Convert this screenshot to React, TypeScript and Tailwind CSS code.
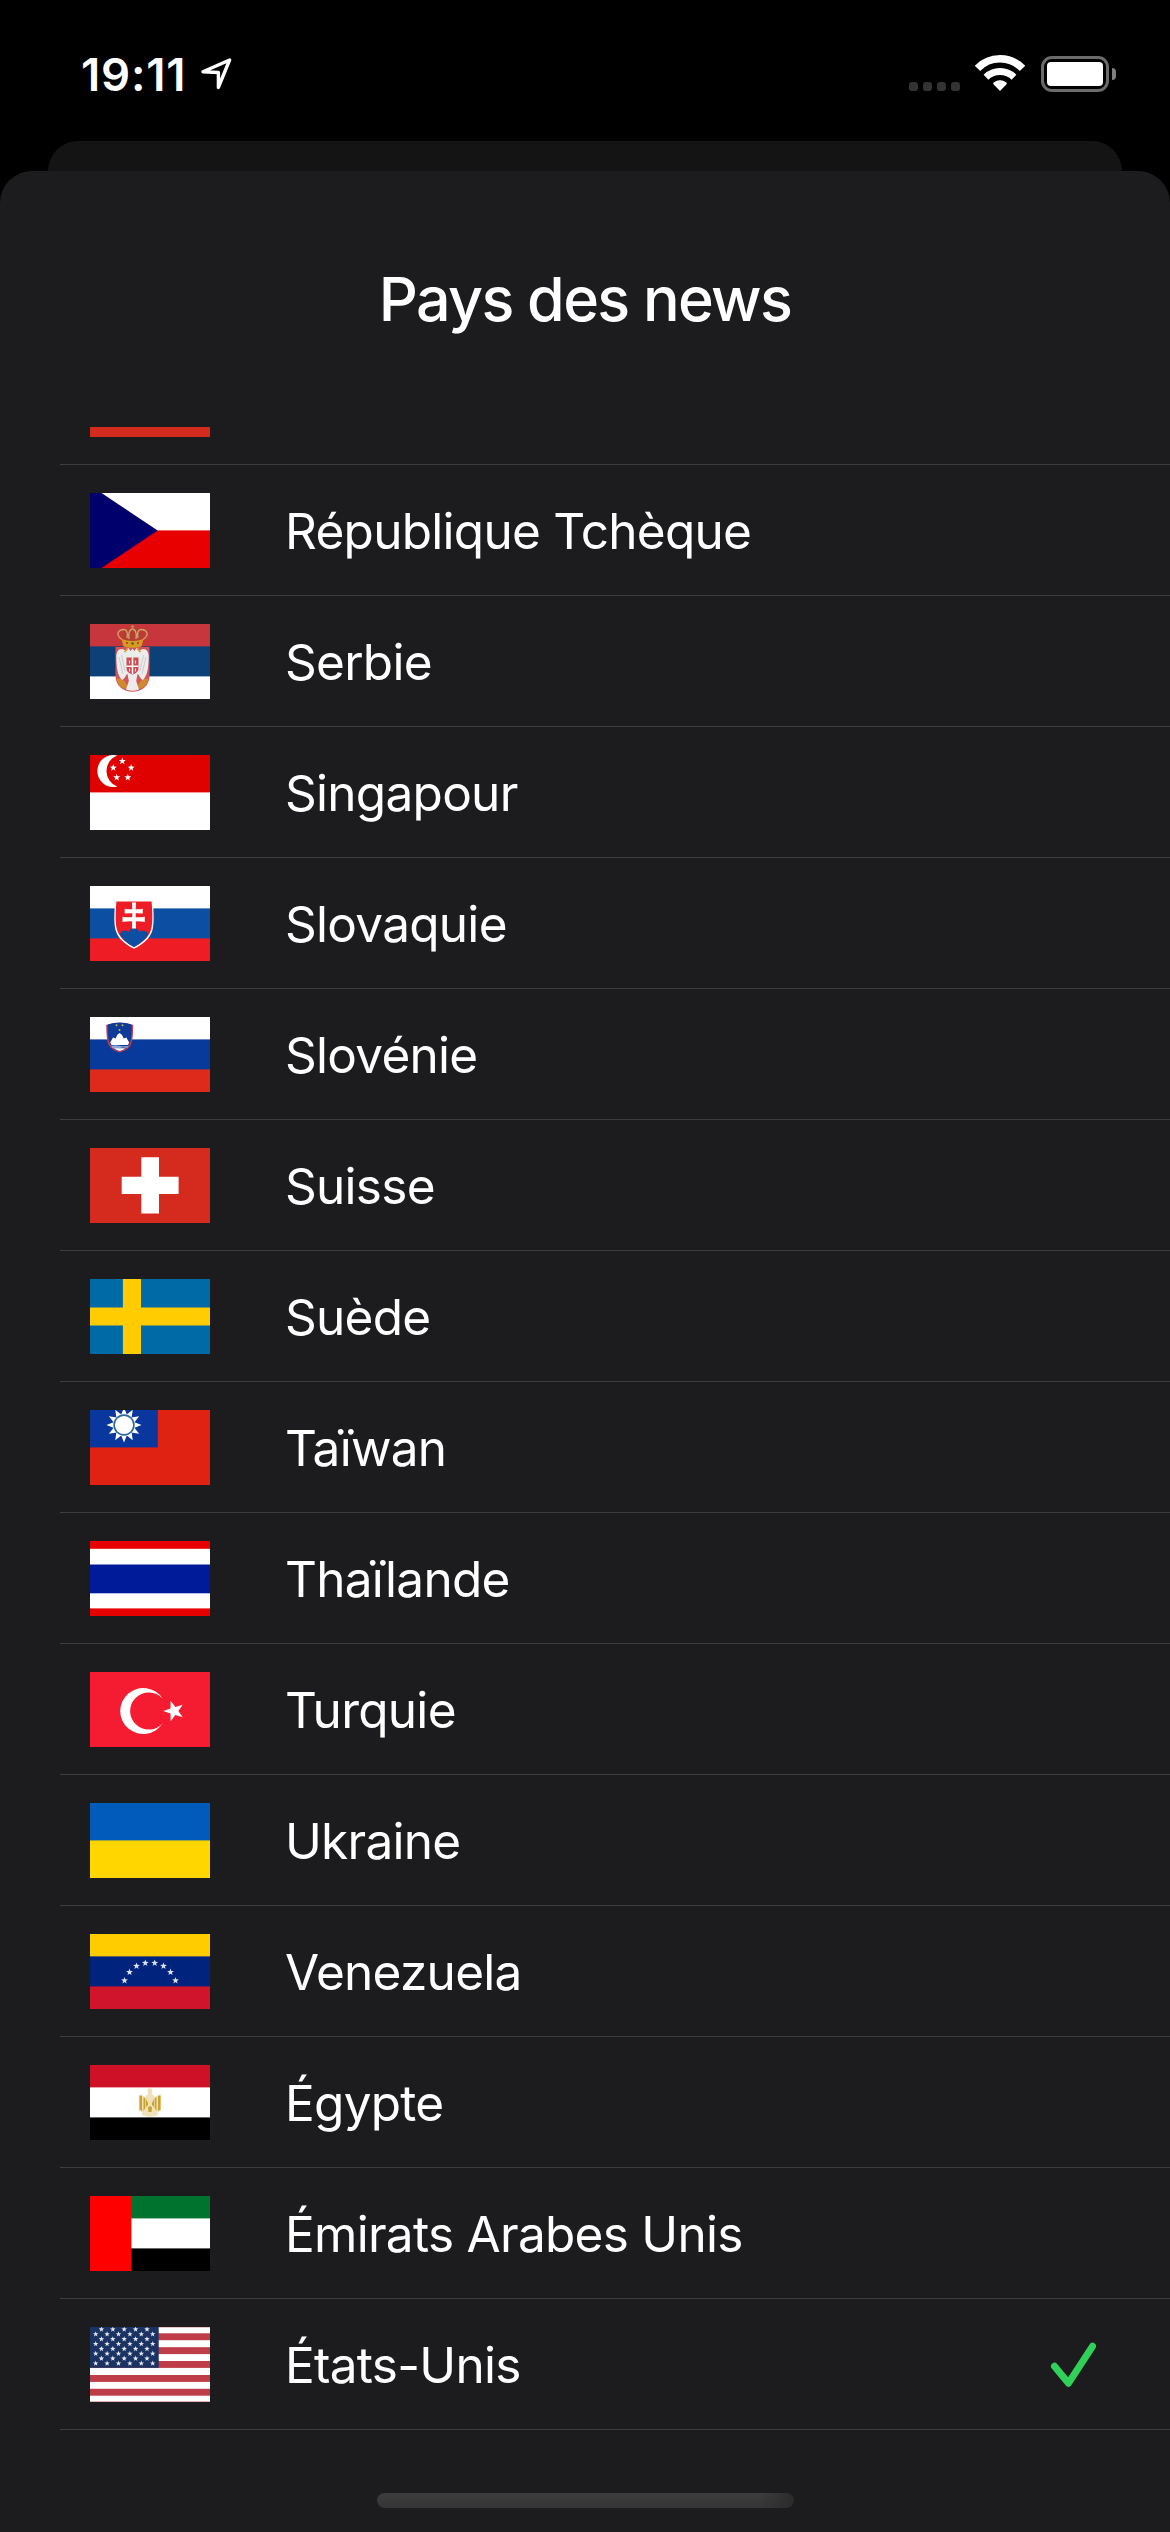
import React from "react";

function starPoints(cx: number, cy: number, r: number, tilt = -90) {
  const pts: string[] = [];
  for (let i = 0; i < 10; i++) {
    const rad = i % 2 === 0 ? r : r * 0.4;
    const a = ((tilt + i * 36) * Math.PI) / 180;
    pts.push(`${(cx + rad * Math.cos(a)).toFixed(2)},${(cy + rad * Math.sin(a)).toFixed(2)}`);
  }
  return pts.join(" ");
}

function Star({ x, y, r, tilt, fill = "#fff" }: { x: number; y: number; r: number; tilt?: number; fill?: string }) {
  return <polygon points={starPoints(x, y, r, tilt)} fill={fill} />;
}

function Bands({ colors, at }: { colors: string[]; at: number[] }) {
  return (
    <>
      {colors.map((c, i) => (
        <rect key={i} x="0" y={at[i]} width="120" height={75 - at[i]} fill={c} />
      ))}
    </>
  );
}

const THIRDS = [0, 22.4, 52.4];

const Czech = () => (
  <>
    <Bands colors={["#fff", "#e80000"]} at={[0, 37.4]} />
    <path d="M0 0H11.5L67.6 37.5 11.5 75H0Z" fill="#00006d" />
  </>
);

const Serbia = () => (
  <>
    <Bands colors={["#c6363c", "#0c4076", "#fff"]} at={THIRDS} />
    <path d="M25.5 23H59.5V52C59.5 62 51 67.8 42.5 67.8S25.5 62 25.5 52Z" fill="#d3545a" />
    <path d="M26.6 55C30 54 36 55 38 65 31 65 27.500 60 26.600 55ZM58.400 55C55 54 49 55 47 65 54 65 57.500 60 58.400 55Z" fill="#cf8a2e" />
    <path d="M38.500 24C35 24 37 28 34.500 26 30 23 26 27 26.300 33 26.500 42 27 51 32 56 35 55 36 50 37.500 50L38.800 57 36 65.500Q42.500 68 49 65.500L46.200 57 47.500 50C49 50 50 55 53 56 58 51 58.500 42 58.700 33 59 27 55 23 50.500 26 48 28 50 24 46.500 24L44.500 27 42.500 24.500 40.500 27Z" fill="#ececec" />
    <path d="M29 33L33 50M31.500 31L35 47M56 33L52 50M53.500 31L50 47" stroke="#b9bcc2" strokeWidth="0.7" />
    <path d="M36.500 33.500H48.500V44C48.500 48 45 50 42.500 50.500 40 50 36.500 48 36.500 44Z" fill="#cf4a51" />
    <path d="M42.500 33.500V50M36.500 42.300H48.500" stroke="#fff" strokeWidth="1.600" />
    <path d="M39.500 36.500V39.500M45.500 36.500V39.500M39.500 44.500V47.500M45.500 44.500V47.500" stroke="#eee" strokeWidth="1.100" />
    <path d="M32.500 14Q31 5.500 42.500 5.500T52.500 14L51.500 20H33.500Z" fill="#a8442f" opacity="0.600" />
    <path d="M33.500 22.500L31.500 15Q42.500 19 53.500 15L51.500 22.500Q42.500 25 33.500 22.500Z" fill="#d99a22" />
    <path d="M32 15.500C25 11 28 5.500 34 5.500 37 5.500 38 9 37 14M53 15.500C60 11 57 5.500 51 5.500 48 5.500 47 9 48 14M39 15C38 9 39.500 5.500 42.500 5 45.500 5.500 47 9 46 15" fill="none" stroke="#cba566" strokeWidth="1.400" />
    <path d="M42.500 1V5.500M40.800 2.700H44.200" stroke="#b98f45" strokeWidth="1.300" />
    <circle cx="42.500" cy="19.500" r="1.300" fill="#40643c" />
    <circle cx="37" cy="19" r="1" fill="#a83324" />
    <circle cx="48" cy="19" r="1" fill="#a83324" />
    <path d="M38 24.500L34.500 28M47 24.500L50.500 28" stroke="#d99a22" strokeWidth="1.600" />
  </>
);

const Singapore = () => (
  <>
    <Bands colors={["#df0000", "#fff"]} at={[0, 37.4]} />
    <path d="M27.300 0.500A16 16 0 1 0 27.300 31.500A16.500 16.500 0 0 1 27.300 0.500Z" fill="#fff" />
    {[[32.3, 6.2], [23.3, 12.8], [41.2, 12.8], [26.7, 22.5], [37.8, 22.5]].map(([x, y]) => (
      <Star key={x} x={x} y={y} r={3.7} />
    ))}
  </>
);

const Slovakia = () => (
  <>
    <Bands colors={["#fff", "#0b4ea2", "#ee1c25"]} at={THIRDS} />
    <path d="M25.300 14.300H62.700C63.500 24 64.500 36 62.500 44 60 53 52 59 44 62.700 36 59 28 53 25.500 44 23.500 36 24.500 24 25.300 14.300Z" fill="#fff" />
    <path d="M26.400 15.500H61.600C62.300 25 63 36 61.200 43 59 52 51 57.500 44 60.900 37 57.500 29 52 26.800 43 25 36 25.700 25 26.400 15.500Z" fill="#ee1c25" />
    <path d="M30 48.500C30 45 36 43.500 38.800 46.300 39 41 49 41 49.200 46.300 52 43.500 58 45 58 48.500 54.500 54.500 49 58.500 44 60.900 39 58.500 33.500 54.500 30 48.500Z" fill="#0b4ea2" />
    <path d="M42 16.500H46L45.700 23.300Q49 23.500 52.800 22.800V27.600Q49 27 45.700 27.200L45.800 31.300Q50 31.500 54.800 30.700V36Q50 35.200 45.800 35.400L46 42.500H42L42.200 35.400Q38 35.200 32.500 36V30.700Q38 31.500 42.200 31.300L42.300 27.200Q39 27 34.700 27.600V22.800Q39 23.500 42.300 23.300Z" fill="#fff" />
  </>
);

const Slovenia = () => (
  <>
    <Bands colors={["#fff", "#073a9b", "#dd2a1b"]} at={THIRDS} />
    <path d="M16.200 8Q29.700 3.500 43.200 8C43 16 43 24 40.500 28.500 38 32.500 34 34 29.700 35.500 25.500 34 21.500 32.500 19 28.500 16.500 24 16.500 16 16.200 8Z" fill="#c63b4c" />
    <path d="M17.700 7.500Q29.700 3.500 41.700 7.500C41.700 16 41.500 23 39.500 27 37.500 31 34 33 29.700 34.300 25.500 33 22 31 20 27 18 23 17.700 16 17.700 7.500Z" fill="#0e3c98" />
    <path d="M20.200 25.500L23 20.500 25.500 21.500 27.500 17.500 29.700 16 32 18 33.800 21.500 36.300 20.500 39.200 25.500 38 28H21.500Z" fill="#fff" />
    <path d="M21 28.800Q25 27.800 29.700 28.800T38.500 28.800L37 31Q33 30 29.700 31T22.500 31Z" fill="#8fa6d6" />
    <path d="M24 31.300H35.500Q33 33.500 29.700 34 26.500 33.500 24 31.300Z" fill="#fff" />
    <circle cx="26.500" cy="8.300" r="1" fill="#c5b83c" />
    <circle cx="32.500" cy="8.300" r="1" fill="#c5b83c" />
    <circle cx="29.500" cy="13" r="1" fill="#c5b83c" />
  </>
);

const Switzerland = () => (
  <>
    <rect width="120" height="75" fill="#d52b1e" />
    <path d="M51.300 9.200H69V28.700H88.600V46.100H69V65.600H51.300V46.100H31.700V28.700H51.300Z" fill="#fff" />
  </>
);

const Sweden = () => (
  <>
    <rect width="120" height="75" fill="#006aa7" />
    <path d="M32.900 0H51V28.500H120V46.500H51V75H32.900V46.500H0V28.500H32.900Z" fill="#fecc00" />
  </>
);

const Taiwan = () => (
  <>
    <rect width="120" height="75" fill="#df2212" />
    <rect width="67.800" height="37.400" fill="#09379d" />
    {Array.from({ length: 12 }, (_, i) => (
      <polygon key={i} points="31,5 34,-2.500 37,5" fill="#fff" transform={`rotate(${i * 30} 34 15)`} />
    ))}
    <circle cx="34" cy="15" r="9.900" fill="#fff" stroke="#2a6a9c" strokeWidth="1.600" />
  </>
);

const Thailand = () => (
  <Bands colors={["#e80000", "#fff", "#001b9a", "#fff", "#e80000"]} at={[0, 7.8, 23.5, 52.3, 67.4]} />
);

const Turkey = () => (
  <>
    <rect width="120" height="75" fill="#f51b31" />
    <path d="M72.500 26.500A23 23 0 1 0 72.500 51.500A18.600 18.600 0 1 1 72.500 26.500Z" fill="#fff" />
    <Star x={84} y={39} r={10.8} tilt={180} />
  </>
);

const Ukraine = () => <Bands colors={["#005bbb", "#ffd600"]} at={[0, 37.4]} />;

const Venezuela = () => (
  <>
    <Bands colors={["#ffcc00", "#00247d", "#cf142b"]} at={THIRDS} />
    {[[34.5, 46.5], [39.5, 38.2], [46.5, 32], [55.3, 29], [64.7, 29], [73.5, 32], [80.5, 38.2], [85.5, 46.5]].map(([x, y]) => (
      <Star key={x} x={x} y={y} r={3.6} fill="#dfe3f0" />
    ))}
  </>
);

const Egypt = () => (
  <>
    <Bands colors={["#ce1126", "#fff", "#000"]} at={THIRDS} />
    <path d="M57.500 24.500Q60 22 62.500 24.500L62 29.500Q64.500 30 64.500 32L69.500 29.500H71.200V45.500L67.500 47.500 68 50Q60 53.500 52 50L52.500 47.500 48.800 45.500V29.500H50.500L55.500 32Q55.500 30 58 29.500Z" fill="#efe2b8" />
    <path d="M49.500 31L52 30.500V46L49.500 44.500ZM53.500 32.500L55.300 33V43L53.500 46ZM70.500 31L68 30.500V46L70.500 44.500ZM66.500 32.500L64.700 33V43L66.500 46ZM56 34L58 38V40L56 42ZM64 34L62 38V40L64 42ZM58 42.500Q60 40 62 42.500L61.500 47H58.500Z" fill="#c9a22f" />
  </>
);

const Emirates = () => (
  <>
    <Bands colors={["#00732f", "#fff", "#000"]} at={THIRDS} />
    <rect width="41.400" height="75" fill="#f00" />
  </>
);

const UnitedStates = () => (
  <>
    <rect width="120" height="75" fill="#fff" />
    {[-6.6, 6.3, 20.2, 34, 48, 61.8, 74.6].map((y) => (
      <rect key={y} y={y} width="120" height="6.900" fill="#bf3d48" />
    ))}
    <rect y="0" width="68.700" height="40.800" fill="#1b3363" />
    {Array.from({ length: 8 }, (_, row) =>
      Array.from({ length: row % 2 ? 6 : 5 }, (_, col) => (
        <Star key={`${row}-${col}`} x={(row % 2 ? 5.7 : 11.4) + col * 11.4} y={2.3 + row * 4.87} r={2.9} fill="#e6e9f0" />
      )),
    )}
  </>
);

const countries: { name: string; Flag: React.FC; selected?: boolean }[] = [
  { name: "République Tchèque", Flag: Czech },
  { name: "Serbie", Flag: Serbia },
  { name: "Singapour", Flag: Singapore },
  { name: "Slovaquie", Flag: Slovakia },
  { name: "Slovénie", Flag: Slovenia },
  { name: "Suisse", Flag: Switzerland },
  { name: "Suède", Flag: Sweden },
  { name: "Taïwan", Flag: Taiwan },
  { name: "Thaïlande", Flag: Thailand },
  { name: "Turquie", Flag: Turkey },
  { name: "Ukraine", Flag: Ukraine },
  { name: "Venezuela", Flag: Venezuela },
  { name: "Égypte", Flag: Egypt },
  { name: "Émirats Arabes Unis", Flag: Emirates },
  { name: "États-Unis", Flag: UnitedStates, selected: true },
];

function StatusBar() {
  return (
    <header className="flex h-[141px] items-start justify-between pl-[81px] pr-[54px] pt-[55px]">
      <div className="flex items-start">
        <span className="w-[120px] whitespace-nowrap text-[45.500px] font-semibold leading-[39px] tracking-[0.800px]">19:11</span>
        <svg className="mt-[3px] h-8 w-8" viewBox="0 0 32 32" fill="none" stroke="#fff" strokeWidth="3.400" strokeLinejoin="round">
          <path d="M2 13.800L28.600 2 17.400 29.400V14.500Z" />
        </svg>
      </div>
      <div className="flex h-[37px] items-center">
        <div className="mr-[15px] flex gap-[5px] self-end pb-px">
          {[0, 1, 2, 3].map((i) => (
            <span key={i} className="size-[9px] rounded-[3px] bg-[#333]" />
          ))}
        </div>
        <svg className="mr-[16px] h-9 w-[50px] self-start" viewBox="0 0 50 36" fill="none" stroke="#fff">
          <path d="M2.500 13.400A31.200 31.200 0 0 1 47.500 13.400" strokeWidth="7.600" />
          <path d="M11 22.200A20.300 20.300 0 0 1 39 22.200" strokeWidth="7" />
          <path d="M25 36L18 28.800Q20 25.300 25 25.300T32 28.800Z" fill="#fff" stroke="none" />
        </svg>
        <div className="flex h-9 w-[68px] self-end rounded-[11px] border-[3px] border-[#6b6b6b] p-[3px]">
          <div className="flex-1 rounded-[4px] bg-white" />
        </div>
        <div className="ml-[3px] h-[12px] w-[4px] rounded-r-full bg-[#7f7f7f]" />
      </div>
    </header>
  );
}

function CountryRow({ name, Flag, selected }: { name: string; Flag: React.FC; selected?: boolean }) {
  return (
    <li className="ml-[60px] flex h-[131px] items-center border-b border-[#3d3d41] pl-[30px] pr-[70px]">
      <svg className="h-[75px] w-[120px] shrink-0" viewBox="0 0 120 75">
        <Flag />
      </svg>
      <span className="ml-[75px] flex-1 whitespace-nowrap pt-[2px] text-[49.500px] leading-[60px] tracking-[-0.720px]">{name}</span>
      {selected && (
        <svg className="h-[48px] w-[50px]" viewBox="0 0 50 48" fill="none" stroke="#30d158" strokeWidth="7" strokeLinecap="round" strokeLinejoin="round">
          <path d="M4.500 26.300L18.500 43.200 42.500 6.300" />
        </svg>
      )}
    </li>
  );
}

export default function App() {
  return (
    <div className="flex h-[2532px] w-[1170px] flex-col overflow-hidden bg-black font-['Inter',sans-serif] text-white">
      <StatusBar />
      <div className="mx-12 h-[30px] shrink-0 rounded-t-[30px] bg-[#141414]" />
      <main className="flex flex-1 flex-col rounded-t-[32px] bg-[#1c1c1e]">
        <h1 className="flex h-[256px] shrink-0 items-center justify-center text-[61px] font-medium leading-none tracking-[-1.700px]">
          Pays des news
        </h1>
        <ul>
          <li className="ml-[60px] h-[38px] border-b border-[#3d3d41] pl-[30px]">
            <div className="h-[10px] w-[120px] bg-[#d52b1e]" />
          </li>
          {countries.map((c) => (
            <CountryRow key={c.name} {...c} />
          ))}
        </ul>
        <div className="mx-auto mb-6 mt-auto h-[15px] w-[417px] rounded-full bg-[linear-gradient(to_right,transparent_92%,#2b2b2b),linear-gradient(#3d3d3d,#353535)]" />
      </main>
    </div>
  );
}
